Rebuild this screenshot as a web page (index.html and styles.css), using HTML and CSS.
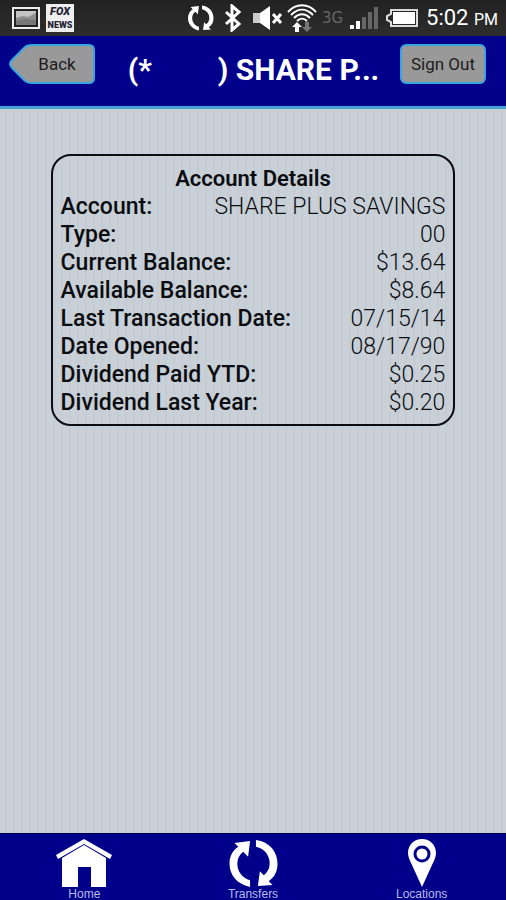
FILE: index.html
```
<!DOCTYPE html>
<html lang="en">
<head>
    <meta charset="UTF-8">
    <meta name="viewport" content="width=device-width, initial-scale=1.0">
    <title>Account Details</title>
    <link rel="stylesheet" href="styles.css">
</head>
<body>
    <div class="status-bar">
        <div class="notifications">
            <svg width="28" height="22" viewBox="0 0 28 22">
                <rect x="1" y="1" width="26" height="20" fill="#222" stroke="#eee" stroke-width="2"/>
                <rect x="4" y="4" width="20" height="14" fill="#8d8d8d"/>
                <path d="M4 11l7-2 5 1 8-4v-2H4z" fill="#c4c4c4"/>
                <path d="M4 18v-4l8-2 12 1v5z" fill="#777"/>
            </svg>
            <div class="news-icon"><span>FOX</span><span>NEWS</span></div>
        </div>
        <div class="system">
            <svg class="sync" width="26" height="26" viewBox="0 0 50 50" fill="#fff">
                <path d="M21 49C7 46 0 36 0 25C0 17 4 11 9 8L5 4L21 2L19 18L14 13C10 16 8 20 8 25C8 33 13 40 21 42z"/>
                <path d="M27 1C41 3 49 13 49 25C49 33 46 39 40 43L44 47L29 48L31 33L35 37C39 34 41 30 41 25C41 17 36 10 27 8z"/>
            </svg>
            <svg class="bluetooth" width="18" height="28" viewBox="0 0 18 28" fill="none" stroke="#fff" stroke-width="3">
                <path d="M2 8l13 12-7 6V2l7 6L2 20"/>
            </svg>
            <svg class="mute" width="30" height="26" viewBox="0 0 30 26">
                <path d="M1 8h7v10H1z" fill="#ccc"/>
                <path d="M8 8l10-7v24L8 18z" fill="#fff"/>
                <path d="M21 9l8 9m0-9l-8 9" stroke="#fff" stroke-width="3"/>
            </svg>
            <svg class="wifi" width="32" height="30" viewBox="0 0 32 30" fill="none" stroke="#fff" stroke-width="2">
                <path d="M2 9c8-9 20-9 28 0M5 12c7-7 15-7 22 0M8 15c5-5 11-5 16 0M11 18c3-3 7-3 10 0"/>
                <path d="M11 19l5 5h-3v5H9v-5H6z" fill="#fff" stroke="none"/>
                <path d="M21 29l5-5h-3v-5h-4v5h-3z" fill="#777" stroke="none"/>
            </svg>
            <span class="network">3G</span>
            <svg class="signal" width="28" height="22" viewBox="0 0 28 22">
                <path d="M0 18h4v4H0zM6 14h4v8H6z" fill="#fff"/>
                <path d="M12 10h4v12h-4zM18 5h4v17h-4zM24 0h4v22h-4z" fill="#666"/>
            </svg>
            <svg class="battery" width="32" height="18" viewBox="0 0 32 18">
                <path d="M5 1h26v16H5v-4L1 11V7l4-2z" fill="none" stroke="#ddd" stroke-width="2"/>
                <rect x="7" y="3" width="22" height="12" fill="#fff"/>
            </svg>
            <span class="clock">5:02 <small>PM</small></span>
        </div>
    </div>

    <header class="header">
        <button class="back-btn" type="button">
            <svg width="86" height="40" viewBox="0 0 86 40">
                <path d="M23 1H80Q85 1 85 6V34Q85 39 80 39H23Q17 39 14 35L3 24Q-1 20 3 16L14 5Q17 1 23 1z" fill="#999" stroke="#39a5dc" stroke-width="2"/>
            </svg>
            <span>Back</span>
        </button>
        <h1>(*<span class="masked"></span>) SHARE P...</h1>
        <button class="sign-out-btn" type="button">Sign Out</button>
    </header>

    <main>
        <table class="details">
            <caption>Account Details</caption>
            <tbody>
                <tr><th scope="row">Account:</th><td>SHARE PLUS SAVINGS</td></tr>
                <tr><th scope="row">Type:</th><td>00</td></tr>
                <tr><th scope="row">Current Balance:</th><td>$13.64</td></tr>
                <tr><th scope="row">Available Balance:</th><td>$8.64</td></tr>
                <tr><th scope="row">Last Transaction Date:</th><td>07/15/14</td></tr>
                <tr><th scope="row">Date Opened:</th><td>08/17/90</td></tr>
                <tr><th scope="row">Dividend Paid YTD:</th><td>$0.25</td></tr>
                <tr><th scope="row">Dividend Last Year:</th><td>$0.20</td></tr>
            </tbody>
        </table>
    </main>

    <nav class="tabs">
        <a href="#home">
            <svg width="56" height="49" viewBox="0 0 56 49" fill="#fff">
                <path d="M28 0L0 16L2 20L28 5L54 20L56 16z"/>
                <path d="M28 6L50 19V48H35V28H22V48H6V19z"/>
            </svg>
            Home
        </a>
        <a href="#transfers">
            <svg width="49" height="49" viewBox="0 0 49 50" fill="#fff">
                <path d="M21 49C7 46 0 36 0 25C0 17 4 11 9 8L5 4L21 2L19 18L14 13C10 16 8 20 8 25C8 33 13 40 21 42z"/>
                <path d="M27 1C41 3 49 13 49 25C49 33 46 39 40 43L44 47L29 48L31 33L35 37C39 34 41 30 41 25C41 17 36 10 27 8z"/>
            </svg>
            Transfers
        </a>
        <a href="#locations">
            <svg width="28" height="49" viewBox="0 0 28 49">
                <path d="M14 0C6 0 0 6 0 14C0 18 2 22 4 26L14 48L24 26C26 22 28 18 28 14C28 6 22 0 14 0z" fill="#fff"/>
                <circle cx="14" cy="15" r="7" fill="#fff" stroke="#00008b" stroke-width="3"/>
            </svg>
            Locations
        </a>
    </nav>
</body>
</html>
```
FILE: styles.css
```
* {
    margin: 0;
    padding: 0;
    box-sizing: border-box;
}

body {
    font-family: Roboto, sans-serif;
    color: #0b0d10;
    background: repeating-linear-gradient(90deg, #c9d0d8 0, #c9d0d8 4px, #c3cbd3 6px, #c9d0d8 8px);
    min-height: 100vh;
    display: flex;
    flex-direction: column;
}

svg {
    display: block;
    flex-shrink: 0;
}

.status-bar {
    height: 36px;
    padding: 0 8px 0 12px;
    background: linear-gradient(#222, #2d2d2d);
    color: #fff;
    display: flex;
    align-items: center;
    justify-content: space-between;
}

.notifications,
.system {
    display: flex;
    align-items: center;
}

.notifications {
    gap: 6px;
}

.news-icon {
    width: 28px;
    height: 28px;
    background: #eee;
    color: #223;
    font-size: 9px;
    font-weight: 900;
    line-height: 12px;
    display: flex;
    flex-direction: column;
    justify-content: center;
    align-items: center;
}

.news-icon span:first-child {
    font-size: 11px;
    font-style: italic;
    line-height: 14px;
}

.bluetooth {
    margin-left: 10px;
}

.mute {
    margin-left: 10px;
}

.wifi {
    margin-left: 4px;
}

.network {
    margin-left: 4px;
    width: 24px;
    color: #666;
    font-family: "DejaVu Sans", sans-serif;
    font-size: 15px;
}

.signal {
    margin-left: 4px;
}

.battery {
    margin-left: 8px;
}

.clock {
    margin-left: 8px;
    font-size: 22px;
    line-height: 36px;
    padding-top: 2px;
    white-space: nowrap;
}

.clock small {
    font-size: 16px;
}

.header {
    height: 73px;
    padding: 8px 20px 0 9px;
    background: #00008b;
    border-bottom: 3px solid #4ba3d3;
    display: flex;
    align-items: flex-start;
    justify-content: space-between;
}

.header h1 {
    flex: 1;
    margin-top: 6px;
    padding-left: 12px;
    color: #fff;
    font-size: 30px;
    font-weight: 700;
    line-height: 40px;
    text-align: center;
    white-space: nowrap;
}

.masked {
    display: inline-block;
    width: 66px;
}

.header button {
    height: 40px;
    color: #1c1c1c;
    font-family: inherit;
    font-size: 17px;
    cursor: pointer;
}

.back-btn {
    display: grid;
    place-items: center;
    background: none;
    border: none;
}

.back-btn svg,
.back-btn span {
    grid-area: 1 / 1;
}

.back-btn span {
    padding-left: 10px;
}

.sign-out-btn {
    width: 86px;
    background: #999;
    border: 2px solid #39a5dc;
    border-radius: 6px;
}

main {
    flex: 1;
    padding-top: 45px;
}

.details {
    display: block;
    width: 80%;
    margin: 0 auto;
    padding: 9px 8px 7px;
    border: 2px solid #0b0d10;
    border-radius: 20px;
    font-size: 23px;
    line-height: 28px;
}

.details caption {
    display: block;
    font-size: 22px;
    font-weight: 600;
}

.details tbody {
    display: block;
}

.details tr {
    display: flex;
    justify-content: space-between;
}

.details th {
    font-weight: 500;
    text-align: left;
}

.details td {
    font-weight: 300;
    text-align: right;
}

.tabs {
    height: 67px;
    padding-top: 5px;
    background: #00008b;
    border-top: 1px solid #00004a;
    display: flex;
}

.tabs a {
    flex: 1;
    display: flex;
    flex-direction: column;
    align-items: center;
    color: #b9bbe4;
    font-family: "Liberation Sans", Arial, sans-serif;
    font-size: 12px;
    line-height: 12px;
    text-decoration: none;
}
```
